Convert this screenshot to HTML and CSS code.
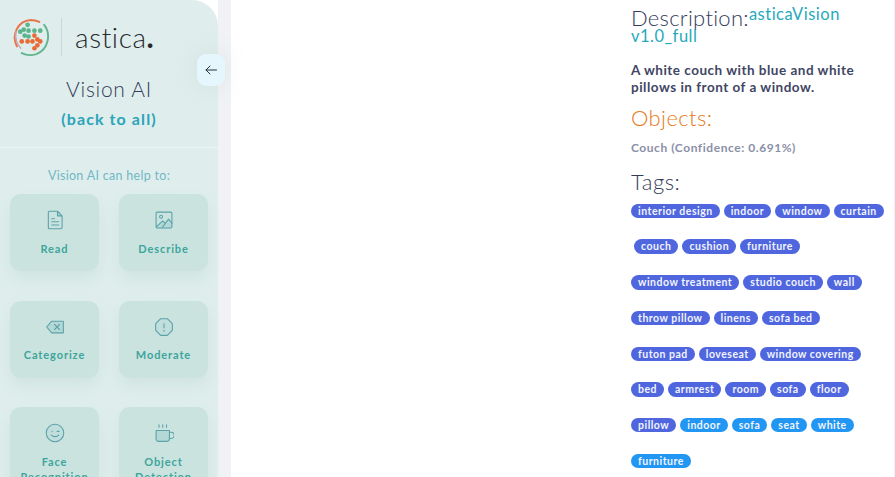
FILE: index.html
```html
<!DOCTYPE html>
<html lang="en">
<head>
<meta charset="utf-8">
<title>Vision AI</title>
<link rel="stylesheet" href="styles.css">
</head>
<body>
<div class="page">
  <aside class="sidebar">
    <div class="brand">
      <svg class="logo" viewBox="0 0 40 40" fill="none">
        <path d="M5 29C-1 17 6 3 19 2c4 0 7 1 9 2" stroke="#e8734a" stroke-width="2" stroke-linecap="round"/>
        <path d="M4 14C3 21 5 27 9 31" stroke="#c9a7b5" stroke-width="1.5" stroke-linecap="round"/>
        <path d="M33 7c7 9 5 25-8 30-6 2-11 1-15-1" stroke="#62b58f" stroke-width="2" stroke-linecap="round"/>
        <g fill="#5cb48d">
          <circle cx="16" cy="7" r="2.4"/><circle cx="12" cy="12" r="2.4"/><circle cx="8.500" cy="14" r="2.400"/>
          <circle cx="17" cy="13" r="2.400"/><circle cx="23" cy="13" r="2.400"/><circle cx="29" cy="13" r="2.400"/>
          <circle cx="13" cy="18" r="2.400"/><circle cx="17" cy="19" r="2.400"/>
        </g>
        <g fill="#e96a35">
          <circle cx="23" cy="18" r="2.400"/><circle cx="26" cy="22" r="2.400"/><circle cx="10" cy="24" r="2.400"/>
          <circle cx="16" cy="24" r="2.400"/><circle cx="21" cy="24" r="2.400"/><circle cx="29" cy="24" r="2.400"/>
          <circle cx="26" cy="28" r="2.400"/><circle cx="23" cy="31" r="2.400"/>
        </g>
      </svg>
      <span class="brand-rule"></span>
      <span class="brand-name">astica<b>.</b></span>
    </div>
    <h1 class="title">Vision AI</h1>
    <a class="back" href="#">(back to all)</a>
    <hr class="rule">
    <p class="help">Vision AI can help to:</p>
    <div class="cards">
      <div class="card">
        <svg class="icon" viewBox="0 0 24 24"><path class="fill" d="M15 1.500v5.500h5z"/><path class="line" d="M6 1.500h9l5.500 5.500v14a1.500 1.500 0 0 1-1.500 1.500H5.500A1.500 1.500 0 0 1 4 21V3a1.500 1.500 0 0 1 1.500-1.500zM15 1.500V7h5.500M8 10.500h3.500M8 14h8.500M8 18h8.500"/></svg>
        <span class="label">Read</span>
      </div>
      <div class="card">
        <svg class="icon" viewBox="0 0 24 24"><path class="fill" d="M3 19l7-6 3 3 4-4 4.500 5v5H3z"/><rect class="line" x="2.500" y="2.500" width="19" height="19" rx="1.500"/><circle class="line" cx="8.500" cy="8" r="1.800"/><path class="line" d="M3 20l7.500-7 3 3 4-5 4 5M10 21l3.500-5"/></svg>
        <span class="label">Describe</span>
      </div>
      <div class="card">
        <svg class="icon" viewBox="0 0 24 24"><path class="fill" d="M8 5h14v14H8L2 12z"/><path class="line" d="M8 5h14v14H8L2 12zM11.500 9l6 6M17.500 9l-6 6"/></svg>
        <span class="label">Categorize</span>
      </div>
      <div class="card">
        <svg class="icon" viewBox="0 0 24 24"><path class="fill line" d="M8 2h8l6 6v8l-6 6H8l-6-6V8z"/><path class="line" d="M12 8v5M12 16v1"/></svg>
        <span class="label">Moderate</span>
      </div>
      <div class="card">
        <svg class="icon" viewBox="0 0 24 24"><circle class="fill line" cx="12" cy="12" r="10.500"/><path class="line" d="M7.500 14.500c2.500 2.500 6.500 2.500 9 0M8.500 9.500v.8M14.500 10h2.500"/></svg>
        <span class="label">Face Recognition</span>
      </div>
      <div class="card">
        <svg class="icon" viewBox="0 0 24 24"><path class="fill" d="M2.500 9h16v10a3 3 0 0 1-3 3h-10a3 3 0 0 1-3-3z"/><path class="line" d="M2.500 9h16v10a3 3 0 0 1-3 3h-10a3 3 0 0 1-3-3zM18.500 11h2a2.500 2.500 0 0 1 0 7.500h-2M6 2v3M10.500 2v3M15 2v3"/></svg>
        <span class="label">Object Detection</span>
      </div>
    </div>
    <button class="toggle" aria-label="Collapse">
      <svg viewBox="0 0 16 16" fill="none" stroke="#27303f" stroke-width="1" stroke-linecap="round" stroke-linejoin="round"><path d="M13.500 8H3M7 4L3 8l4 4"/></svg>
    </button>
  </aside>
  <div class="gutter"></div>
  <main class="main">
    <section class="results">
      <h2 class="heading heading-description">Description:<span class="model">asticaVision v1.0_full</span></h2>
      <p class="caption">A white couch with blue and white pillows in front of a window.</p>
      <h2 class="heading heading-orange">Objects:</h2>
      <p class="object">Couch (Confidence: 0.691%)</p>
      <h2 class="heading heading-tags">Tags:</h2>
      <div class="tag-list">
        <div class="tag-row"><span class="tag">interior design</span><span class="tag">indoor</span><span class="tag">window</span><span class="tag">curtain</span></div>
        <div class="tag-row tag-row-indent"><span class="tag">couch</span><span class="tag">cushion</span><span class="tag">furniture</span></div>
        <div class="tag-row"><span class="tag">window treatment</span><span class="tag">studio couch</span><span class="tag">wall</span></div>
        <div class="tag-row"><span class="tag">throw pillow</span><span class="tag">linens</span><span class="tag">sofa bed</span></div>
        <div class="tag-row"><span class="tag">futon pad</span><span class="tag">loveseat</span><span class="tag">window covering</span></div>
        <div class="tag-row"><span class="tag">bed</span><span class="tag">armrest</span><span class="tag">room</span><span class="tag">sofa</span><span class="tag">floor</span></div>
        <div class="tag-row"><span class="tag">pillow</span><span class="tag tag-sky">indoor</span><span class="tag tag-sky">sofa</span><span class="tag tag-sky">seat</span><span class="tag tag-sky">white</span></div>
        <div class="tag-row"><span class="tag tag-sky">furniture</span></div>
      </div>
    </section>
  </main>
</div>
</body>
</html>
```
FILE: styles.css
```css
* { box-sizing: border-box; }
html, body { margin: 0; height: 477px; overflow: hidden; }
body { background: #fff; font-family: "Lato", "Noto Sans", sans-serif; }
.page { display: flex; height: 477px; overflow: hidden; }

.sidebar {
  position: relative;
  flex: 0 0 218px;
  height: 560px;
  background: #dfeeec;
  border-top-right-radius: 26px;
  text-align: center;
}
.gutter { flex: 0 0 13px; background: #f0f2f5; }
.main { flex: 1; padding-left: 400px; border-right: 1px solid #eef0f3; }

.brand { display: flex; align-items: center; padding: 18px 0 0 12px; height: 56px; }
.logo { width: 39px; height: 39px; flex: none; }
.brand-rule { width: 1px; height: 38px; background: #c8d8d6; margin-left: 10px; }
.brand-name { margin-left: 13px; font-size: 28px; letter-spacing: .6px; line-height: 38px; color: #27292f; font-weight: 300; }
.brand-name b { font-weight: 900; }

.title { margin: 20px 0 0; font-size: 21px; line-height: 26px; font-weight: 300; color: #353c5a; letter-spacing: .7px; }
.back { display: block; margin-top: 7px; font-size: 16px; line-height: 20px; font-weight: 700; color: #2ba3b9; letter-spacing: 1.100px; text-decoration: none; }
.rule { margin: 18px 0 0; border: 0; border-top: 1px solid #eaf5f4; }
.help { margin: 19px 0 0; font-size: 12.500px; line-height: 17px; color: #6fb8c5; letter-spacing: .3px; }

.cards { display: grid; grid-template-columns: 89px 89px; column-gap: 20px; row-gap: 29.500px; padding: 10px 0 0 10px; }
.card {
  display: flex; flex-direction: column; align-items: center;
  height: 77px; padding-top: 16px;
  background: #cbe3df; border-radius: 11px;
  box-shadow: 0 8px 16px rgba(120, 170, 165, .14);
}
.icon { width: 20px; height: 20px; flex: none; }
.line { fill: none; stroke: #5ba2a9; stroke-width: 1.300; stroke-linejoin: round; stroke-linecap: round; }
.fill { fill: #b3d8d5; }
.fill.line { fill: #c0dedb; }
.label { margin-top: 10.500px; font-size: 11px; line-height: 15px; font-weight: 700; color: #3ca59c; letter-spacing: .9px; }

.toggle {
  position: absolute; left: 197px; top: 54px;
  width: 28px; height: 32px; padding: 0;
  display: flex; align-items: center; justify-content: center;
  background: #e5f6fc; border: 0; border-radius: 9px;
  box-shadow: 0 0 24px rgba(150, 170, 170, .16);
}
.toggle svg { width: 16px; height: 16px; }

.results { width: 263px; }
.heading { margin: 0; font-size: 22px; line-height: 22px; font-weight: 300; color: #353c5a; letter-spacing: .55px; padding-top: 7px; }
.heading-description { padding-top: 5px; line-height: 18px; letter-spacing: .28px; }
.model { font-size: 16.500px; line-height: 18px; font-weight: 400; color: #27a9bd; vertical-align: 6px; letter-spacing: .5px; }
.caption { margin: 13px 0 0; font-size: 13.500px; line-height: 17px; font-weight: 700; color: #3f4664; letter-spacing: .5px; }
.heading-orange { margin-top: 4px; color: #e67a20; letter-spacing: .4px; }
.object { margin: 10px 0 0; font-size: 12px; line-height: 17px; font-weight: 700; color: #8a8fa8; letter-spacing: .55px; }
.heading-tags { margin-top: 8px; }

.tag-list { margin-top: .2px; }
.tag-row { display: flex; gap: 4px; align-items: center; height: 35.700px; }
.tag-row-indent { padding-left: 3px; }
.tag {
  padding: 0 7px; height: 14.500px;
  font-size: 10.500px; line-height: 14.500px; font-weight: 700;
  color: #f2f4ff; letter-spacing: .5px; white-space: nowrap;
  background: #4f66de; border-radius: 8px;
}
.tag-sky { background: #2196f3; }
```
